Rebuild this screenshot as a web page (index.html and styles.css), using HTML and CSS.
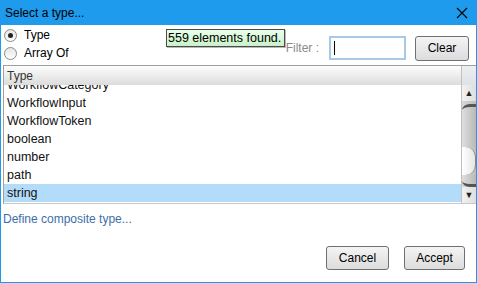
FILE: index.html
```html
<!DOCTYPE html>
<html lang="en">
<head>
    <meta charset="UTF-8">
    <title>Select a type...</title>
    <link rel="stylesheet" href="styles.css">
</head>
<body>
    <div class="window">
        <div class="titlebar">
            <span class="title">Select a type...</span>
            <svg class="close" width="12" height="12" viewBox="0 0 12 12">
                <path d="M1 1 L11 11 M11 1 L1 11" stroke="#000" stroke-width="1.1" fill="none"/>
            </svg>
        </div>
        <div class="content">
            <div class="top-row">
                <div class="radios">
                    <label class="radio-row"><span class="radio checked"></span>Type</label>
                    <label class="radio-row"><span class="radio"></span>Array Of</label>
                </div>
                <div class="filter">
                    <span class="filter-label">Filter :</span>
                    <div class="input"><span class="caret"></span></div>
                    <button class="button clear">Clear</button>
                </div>
                <div class="tooltip">559 elements found.</div>
            </div>
            <div class="table">
                <div class="table-main">
                    <div class="header">Type</div>
                    <div class="rows">
                        <div class="row first">WorkflowCategory</div>
                        <div class="row">WorkflowInput</div>
                        <div class="row">WorkflowToken</div>
                        <div class="row">boolean</div>
                        <div class="row">number</div>
                        <div class="row">path</div>
                        <div class="row selected">string</div>
                    </div>
                </div>
                <div class="scroll-col">
                    <div class="corner"></div>
                    <div class="scrollbar">
                        <div class="arrow">&#9650;</div>
                        <div class="track">
                            <div class="track-top"></div>
                            <div class="thumb"></div>
                            <div class="track-bottom"></div>
                        </div>
                        <div class="arrow">&#9660;</div>
                    </div>
                </div>
            </div>
            <div class="composite">Define composite type...</div>
            <div class="actions">
                <button class="button cancel">Cancel</button>
                <button class="button accept">Accept</button>
            </div>
        </div>
    </div>
</body>
</html>
```

FILE: styles.css
```css
body {
    margin: 0;
    font-family: 'Liberation Sans', Arial, sans-serif;
    font-size: 12px;
    color: #000;
    background: #fff;
}
.window {
    position: relative;
    width: 477px;
    height: 283px;
    box-sizing: border-box;
    border: 1px solid #1f9bee;
    border-top: none;
    display: flex;
    flex-direction: column;
    background: #fff;
}
.titlebar {
    height: 25px;
    margin: 0 -1px;
    background: #1f9bee;
    display: flex;
    align-items: center;
    justify-content: space-between;
    padding: 0 9px 0 5px;
    font-size: 12px;
}
.close {
    display: block;
}
.content {
    flex: 1;
    display: flex;
    flex-direction: column;
}
.top-row {
    height: 40px;
    display: flex;
    justify-content: space-between;
}
.radios {
    display: flex;
    flex-direction: column;
    padding: 1px 0 0 3px;
}
.radio-row {
    display: flex;
    align-items: center;
    height: 18px;
    gap: 7px;
}
.radio {
    width: 11px;
    height: 11px;
    border-radius: 50%;
    border: 1px solid #8a8a8a;
    background: linear-gradient(#e6e6e6, #fdfdfd);
    position: relative;
}
.radio.checked::after {
    content: "";
    position: absolute;
    left: 3px;
    top: 3px;
    width: 5px;
    height: 5px;
    border-radius: 50%;
    background: #222;
}
.filter {
    display: flex;
    align-items: center;
    padding: 6px 7px 0 0;
}
.filter-label {
    color: #8a8a8a;
    margin-right: 10px;
}
.input {
    width: 70px;
    height: 20px;
    border: 2px solid #a9c8e6;
    background: #fff;
    display: flex;
    align-items: center;
    padding-left: 3px;
}
.caret {
    width: 1px;
    height: 14px;
    background: #000;
}
.button {
    font-family: 'Liberation Sans', Arial, sans-serif;
    font-size: 12px;
    color: #000;
    border: 1px solid #707070;
    border-radius: 3px;
    background: linear-gradient(#f4f4f4, #dcdcdc);
    padding: 0;
    height: 24px;
}
.clear {
    width: 54px;
    height: 25px;
    margin-left: 9px;
}
.tooltip {
    position: absolute;
    left: 165px;
    top: 29px;
    height: 16px;
    padding: 0 3px 0 1px;
    line-height: 16px;
    font-size: 12.5px;
    border: 1px solid #4a4a4a;
    background: linear-gradient(#eaffea, #c9f2c9);
    box-shadow: 1px 1px 0 #b8b8b8;
}
.table {
    margin: 0 0 0 2px;
    height: 137px;
    border-top: 1px solid #a0a0a0;
    border-left: 1px solid #a0a0a0;
    border-bottom: 1px solid #c8c8c8;
    display: flex;
}
.table-main {
    flex: 1;
    display: flex;
    flex-direction: column;
    border-right: 1px solid #c0c0c0;
}
.header {
    height: 19px;
    line-height: 20px;
    padding-left: 3px;
    background: linear-gradient(#fdfdfd, #dcdcdc);
    color: #333;
}
.rows {
    flex: 1;
    overflow: hidden;
}
.row {
    height: 18px;
    line-height: 18px;
    padding-left: 3px;
    color: #111;
    font-size: 12.5px;
}
.row.first {
    margin-top: -9px;
}
.row.selected {
    background: #b3dcfb;
}
.scroll-col {
    width: 14px;
    display: flex;
    flex-direction: column;
}
.corner {
    height: 19px;
    background: linear-gradient(#eceff2, #dde2e6);
}
.scrollbar {
    flex: 1;
    display: flex;
    flex-direction: column;
    background: #cfcfcf;
}
.arrow {
    height: 16px;
    font-size: 9px;
    line-height: 16px;
    text-align: center;
    color: #222;
    background: linear-gradient(90deg, #f2f2f2, #dedede);
}
.track {
    flex: 1;
    display: flex;
    flex-direction: column;
    background: linear-gradient(90deg, #d8d8d8, #bcbcbc);
    padding-top: 3px;
}
.track-top {
    height: 40px;
    border-top-left-radius: 8px 6px;
    border-top: 3px solid #555;
    background: linear-gradient(90deg, #dedede, #b8b8b8);
}
.thumb {
    height: 28px;
    border-radius: 0 10px 10px 0;
    background: linear-gradient(90deg, #ffffff, #e6e6e6);
    border-right: 1px solid #888;
}
.track-bottom {
    flex: 1;
    border-bottom-left-radius: 8px 6px;
    border-bottom: 3px solid #555;
    background: linear-gradient(90deg, #dedede, #b8b8b8);
}
.composite {
    color: #3c6ea8;
    padding: 8px 0 0 2px;
    height: 20px;
}
.actions {
    flex: 1;
    display: flex;
    justify-content: flex-end;
    align-items: flex-start;
    gap: 15px;
    padding: 14px 11px 0 0;
}
.cancel {
    width: 63px;
}
.accept {
    width: 61px;
}
```
